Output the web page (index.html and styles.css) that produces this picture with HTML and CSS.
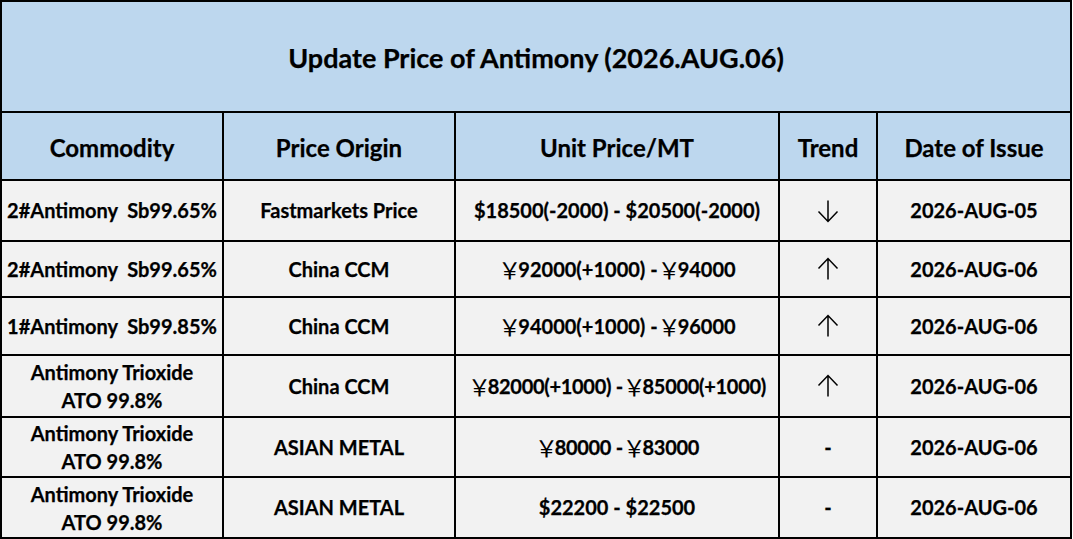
FILE: index.html
```html
<!DOCTYPE html>
<html lang="en">
<head>
<meta charset="utf-8">
<title>Update Price of Antimony</title>
<link rel="stylesheet" href="styles.css">
</head>
<body>
<div class="sheet">
  <div class="cell title">Update Price of Antimony (2026.AUG.06)</div>

  <div class="cell head">Commodity</div>
  <div class="cell head">Price Origin</div>
  <div class="cell head">Unit Price/MT</div>
  <div class="cell head">Trend</div>
  <div class="cell head">Date of Issue</div>

  <div class="cell data">2#Antimony&nbsp; Sb99.65%</div>
  <div class="cell data">Fastmarkets Price</div>
  <div class="cell data">$18500(-2000) - $20500(-2000)</div>
  <div class="cell data trend"><svg class="arrow" viewBox="0 0 22 24" width="22" height="24"><path d="M11 1.5V22.5M1.5 12.5L11 22.5L20.5 12.5" /></svg></div>
  <div class="cell data">2026-AUG-05</div>

  <div class="cell data">2#Antimony&nbsp; Sb99.65%</div>
  <div class="cell data">China CCM</div>
  <div class="cell data"><span class="yen">￥</span>92000(+1000) - <span class="yen">￥</span>94000</div>
  <div class="cell data trend"><svg class="arrow" viewBox="0 0 22 24" width="22" height="24"><path d="M11 22.5V1.5M1.5 11.5L11 1.5L20.5 11.5" /></svg></div>
  <div class="cell data">2026-AUG-06</div>

  <div class="cell data">1#Antimony&nbsp; Sb99.85%</div>
  <div class="cell data">China CCM</div>
  <div class="cell data"><span class="yen">￥</span>94000(+1000) - <span class="yen">￥</span>96000</div>
  <div class="cell data trend"><svg class="arrow" viewBox="0 0 22 24" width="22" height="24"><path d="M11 22.5V1.5M1.5 11.5L11 1.5L20.5 11.5" /></svg></div>
  <div class="cell data">2026-AUG-06</div>

  <div class="cell data two">Antimony Trioxide<br>ATO 99.8%</div>
  <div class="cell data">China CCM</div>
  <div class="cell data tight"><span class="yen">￥</span>82000(+1000) -<span class="yen">￥</span>85000(+1000)</div>
  <div class="cell data trend"><svg class="arrow" viewBox="0 0 22 24" width="22" height="24"><path d="M11 22.5V1.5M1.5 11.5L11 1.5L20.5 11.5" /></svg></div>
  <div class="cell data">2026-AUG-06</div>

  <div class="cell data two">Antimony Trioxide<br>ATO 99.8%</div>
  <div class="cell data">ASIAN METAL</div>
  <div class="cell data tight"><span class="yen">￥</span>80000 -<span class="yen">￥</span>83000</div>
  <div class="cell data trend">-</div>
  <div class="cell data">2026-AUG-06</div>

  <div class="cell data two">Antimony Trioxide<br>ATO 99.8%</div>
  <div class="cell data">ASIAN METAL</div>
  <div class="cell data">$22200 - $22500</div>
  <div class="cell data trend">-</div>
  <div class="cell data">2026-AUG-06</div>
</div>
</body>
</html>
```

FILE: styles.css
```css
html, body {
  margin: 0;
  padding: 0;
  background: #ffffff;
}

.sheet {
  display: grid;
  width: 1068px;
  grid-template-columns: 220px 230px 322px 96px 192px;
  grid-template-rows: 109px 66px 59px 54px 56px 60px 58px 59px;
  gap: 2px;
  padding: 2px;
  background: #000000;
  font-family: Lato, "Liberation Sans", "Noto Sans CJK SC", sans-serif;
  font-weight: 700;
  color: #000000;
  -webkit-text-stroke: 0.25px #000000;
}

.cell {
  display: flex;
  align-items: center;
  justify-content: center;
  text-align: center;
  white-space: nowrap;
}

.title {
  grid-column: 1 / -1;
  background: #bdd7ee;
  font-size: 27px;
  padding-top: 2px;
}

.head {
  background: #bdd7ee;
  font-size: 24px;
  padding-top: 3px;
}

.data {
  background: #f2f2f2;
  font-size: 20px;
  line-height: 27px;
}

.two {
  line-height: 28px;
}

.tight {
  letter-spacing: -0.3px;
}

.yen {
  font-family: "Noto Sans CJK SC", sans-serif;
  font-weight: 400;
  font-size: 23px;
  margin-right: -3px;
  -webkit-text-stroke: 0;
}

.arrow {
  fill: none;
  stroke: #000000;
  stroke-width: 1.5;
}

.trend {
  font-size: 20px;
}
```
